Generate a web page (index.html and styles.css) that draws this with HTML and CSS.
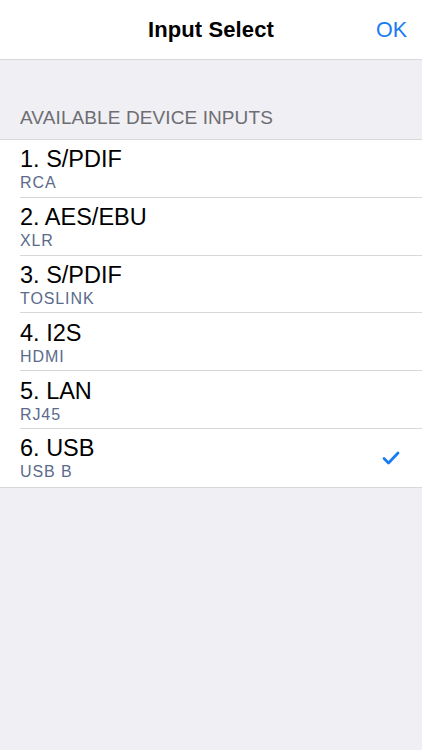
FILE: index.html
```html
<!DOCTYPE html>
<html>
<head>
<meta charset="utf-8">
<link rel="stylesheet" href="styles.css">
</head>
<body>
<div class="screen">
  <header class="navbar">
    <div class="nav-side"></div>
    <div class="nav-title">Input Select</div>
    <div class="nav-side nav-right"><span class="nav-ok">OK</span></div>
  </header>
  <div class="section-header">AVAILABLE DEVICE INPUTS</div>
  <ul class="list">
    <li class="row"><div class="row-text"><div class="row-title">1. S/PDIF</div><div class="row-sub">RCA</div></div></li>
    <li class="row"><div class="row-text"><div class="row-title">2. AES/EBU</div><div class="row-sub">XLR</div></div></li>
    <li class="row"><div class="row-text"><div class="row-title">3. S/PDIF</div><div class="row-sub">TOSLINK</div></div></li>
    <li class="row"><div class="row-text"><div class="row-title">4. I2S</div><div class="row-sub">HDMI</div></div></li>
    <li class="row"><div class="row-text"><div class="row-title">5. LAN</div><div class="row-sub">RJ45</div></div></li>
    <li class="row last"><div class="row-text"><div class="row-title">6. USB</div><div class="row-sub">USB B</div></div>
      <svg class="check" width="18" height="14" viewBox="0 0 18 14"><path d="M2 7.5 L6.5 12 L16 2" fill="none" stroke="#1a7cf2" stroke-width="2.8" stroke-linecap="round" stroke-linejoin="round"/></svg>
    </li>
  </ul>
</div>
</body>
</html>
```
FILE: styles.css
```css
* { box-sizing: border-box; }
html, body { margin: 0; padding: 0; }
body {
  font-family: "Liberation Sans", Arial, sans-serif;
  background: #efeff4;
  width: 422px;
  height: 750px;
  overflow: hidden;
}
.screen { display: flex; flex-direction: column; }
.navbar {
  height: 60px;
  background: #ffffff;
  border-bottom: 1px solid #d8d8dc;
  display: flex;
  align-items: center;
  padding: 0 15px 0 15px;
}
.nav-side { width: 60px; }
.nav-right { display: flex; justify-content: flex-end; }
.nav-title {
  flex: 1;
  text-align: center;
  font-size: 22px;
  font-weight: bold;
  color: #000;
  letter-spacing: 0.1px;
  padding-top: 1px;
}
.nav-ok {
  font-size: 21.5px;
  color: #1a7cf2;
  padding-top: 1px;
}
.section-header {
  padding: 46px 20px 10px 20px;
  font-size: 19px;
  color: #6d6d72;
  line-height: 23px;
  letter-spacing: 0.1px;
}
.list {
  list-style: none;
  margin: 0;
  padding: 0;
  background: #fff;
  border-top: 1px solid #d8d8dc;
  border-bottom: 1px solid #d8d8dc;
}
.row {
  height: 57.8px;
  display: flex;
  align-items: center;
  padding-left: 20px;
  padding-right: 22px;
  position: relative;
}
.row::after {
  content: "";
  position: absolute;
  left: 20px;
  right: 0;
  bottom: 0;
  border-bottom: 1px solid #d8d8dc;
}
.row.last::after { display: none; }
.row-text { flex: 1; display: flex; flex-direction: column; padding-top: 1px; }
.row-title {
  font-size: 23.5px;
  line-height: 26px;
  color: #000;
}
.row-sub {
  font-size: 16px;
  line-height: 19px;
  color: #5a6b8c;
  letter-spacing: 0.9px;
  margin-top: 1px;
}
.check { display: block; }
```
